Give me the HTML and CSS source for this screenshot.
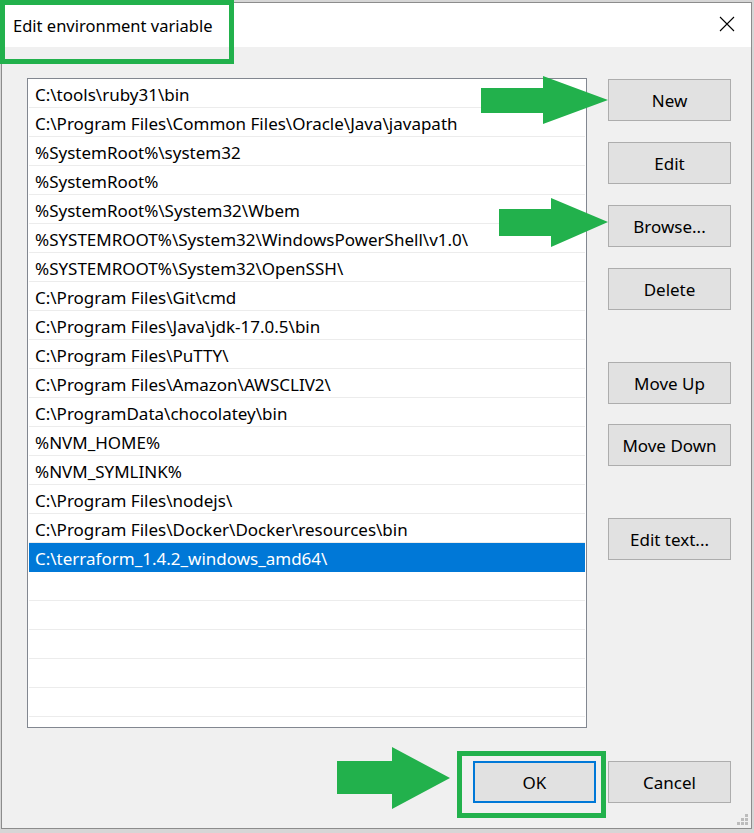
FILE: index.html
```html
<!DOCTYPE html>
<html lang="en">
<head>
  <meta charset="UTF-8">
  <title>Edit environment variable</title>
  <link rel="stylesheet" href="styles.css">
</head>
<body>
  <div class="dialog">
    <div class="titlebar">
      <span class="title">Edit environment variable</span>
      <svg class="close" width="16" height="16" viewBox="0 0 16 16">
        <path d="M1 1 L15 15 M15 1 L1 15" stroke="#000" stroke-width="1.1" fill="none"/>
      </svg>
    </div>

    <div class="content">
      <div class="main">
        <div class="pathlist">
          <div class="row">C:\tools\ruby31\bin</div>
          <div class="row">C:\Program Files\Common Files\Oracle\Java\javapath</div>
          <div class="row">%SystemRoot%\system32</div>
          <div class="row">%SystemRoot%</div>
          <div class="row">%SystemRoot%\System32\Wbem</div>
          <div class="row">%SYSTEMROOT%\System32\WindowsPowerShell\v1.0\</div>
          <div class="row">%SYSTEMROOT%\System32\OpenSSH\</div>
          <div class="row">C:\Program Files\Git\cmd</div>
          <div class="row">C:\Program Files\Java\jdk-17.0.5\bin</div>
          <div class="row">C:\Program Files\PuTTY\</div>
          <div class="row">C:\Program Files\Amazon\AWSCLIV2\</div>
          <div class="row">C:\ProgramData\chocolatey\bin</div>
          <div class="row">%NVM_HOME%</div>
          <div class="row">%NVM_SYMLINK%</div>
          <div class="row">C:\Program Files\nodejs\</div>
          <div class="row">C:\Program Files\Docker\Docker\resources\bin</div>
          <div class="row selected">C:\terraform_1.4.2_windows_amd64\</div>
          <div class="row"></div>
          <div class="row"></div>
          <div class="row"></div>
          <div class="row"></div>
          <div class="row"></div>
          <div class="row"></div>
        </div>

        <div class="side-buttons">
          <div class="btn-group">
            <button class="btn">New</button>
            <button class="btn">Edit</button>
            <button class="btn">Browse...</button>
            <button class="btn">Delete</button>
          </div>
          <div class="btn-group">
            <button class="btn">Move Up</button>
            <button class="btn">Move Down</button>
          </div>
          <div class="btn-group">
            <button class="btn">Edit text...</button>
          </div>
        </div>
      </div>

      <div class="footer">
        <button class="btn btn-default">OK</button>
        <button class="btn">Cancel</button>
      </div>
    </div>

    <!-- size grip -->
    <svg class="grip" width="12" height="12" viewBox="0 0 12 12">
      <rect x="8" y="0" width="3" height="3" fill="#bcbcbc"/>
      <rect x="4" y="4" width="3" height="3" fill="#bcbcbc"/>
      <rect x="8" y="4" width="3" height="3" fill="#bcbcbc"/>
      <rect x="0" y="8" width="3" height="3" fill="#bcbcbc"/>
      <rect x="4" y="8" width="3" height="3" fill="#bcbcbc"/>
      <rect x="8" y="8" width="3" height="3" fill="#bcbcbc"/>
    </svg>
  </div>

  <!-- annotations drawn over the screenshot -->
  <div class="mark mark-title"></div>
  <div class="mark mark-ok"></div>
  <svg class="arrows" width="754" height="833" viewBox="0 0 754 833">
    <polygon points="481,88 543,88 543,76 608,100 543,124 543,113 481,113"/>
    <polygon points="499,209 551,209 551,198 608,222 551,247 551,236 499,236"/>
    <polygon points="337,761 392,761 392,747 450,778 392,809 392,794 337,794"/>
  </svg>
</body>
</html>
```

FILE: styles.css
```css
html, body {
  margin: 0;
  height: 100%;
}
body {
  font-family: 'Noto Sans', 'Open Sans', sans-serif;
  font-size: 17px;
  color: #000;
  background-color: #d6d6d6;
  padding: 2px 0 0 1px;
  box-sizing: border-box;
  position: relative;
  overflow: hidden;
}
.dialog {
  position: relative;
  width: 751px;
  height: 827px;
  box-sizing: border-box;
  border: 1px solid #8c8c8c;
  background-color: #f0f0f0;
  display: flex;
  flex-direction: column;
}
.titlebar {
  height: 44px;
  background-color: #fff;
  display: flex;
  align-items: center;
  justify-content: space-between;
  padding: 0 16px 0 11px;
  flex-shrink: 0;
}
.title {
  font-size: 16.5px;
  padding-top: 1px;
}
.close {
  margin-top: -2px;
}
.content {
  flex: 1;
  padding: 31px 20px 0 25px;
}
.main {
  display: flex;
  gap: 21px;
}
.pathlist {
  width: 560px;
  height: 650px;
  box-sizing: border-box;
  border: 1px solid #828790;
  background-color: #fff;
  padding: 0 1px;
  overflow: hidden;
}
.row {
  height: 29px;
  box-sizing: border-box;
  border-bottom: 1px solid #ececec;
  padding: 4px 0 0 6px;
  white-space: nowrap;
  line-height: 24px;
}
.row.selected {
  background-color: #0078d7;
  border-bottom-color: #0078d7;
  color: #fff;
}
.side-buttons {
  padding-top: 1px;
  display: flex;
  flex-direction: column;
}
.btn-group {
  display: flex;
  flex-direction: column;
  gap: 21px;
}
.btn-group + .btn-group {
  margin-top: 52px;
}
.btn-group:nth-child(2) {
  gap: 20px;
}
.btn {
  width: 123px;
  height: 42px;
  box-sizing: border-box;
  background-color: #e1e1e1;
  border: 1px solid #adadad;
  border-radius: 0;
  font-family: inherit;
  font-size: 17px;
  color: #000;
  padding: 0;
  margin: 0;
}
.btn-default {
  border: 2px solid #0078d7;
}
.footer {
  display: flex;
  justify-content: flex-end;
  gap: 12px;
  margin-top: 33px;
}
.grip {
  position: absolute;
  right: 2px;
  bottom: 2px;
}
.mark {
  position: absolute;
  border: 5px solid #22b14c;
  box-sizing: border-box;
}
.mark-title {
  left: 0;
  top: 0;
  width: 234px;
  height: 64px;
}
.mark-ok {
  left: 457px;
  top: 751px;
  width: 149px;
  height: 67px;
}
.arrows {
  position: absolute;
  left: 0;
  top: 0;
  fill: #22b14c;
  pointer-events: none;
}
```
